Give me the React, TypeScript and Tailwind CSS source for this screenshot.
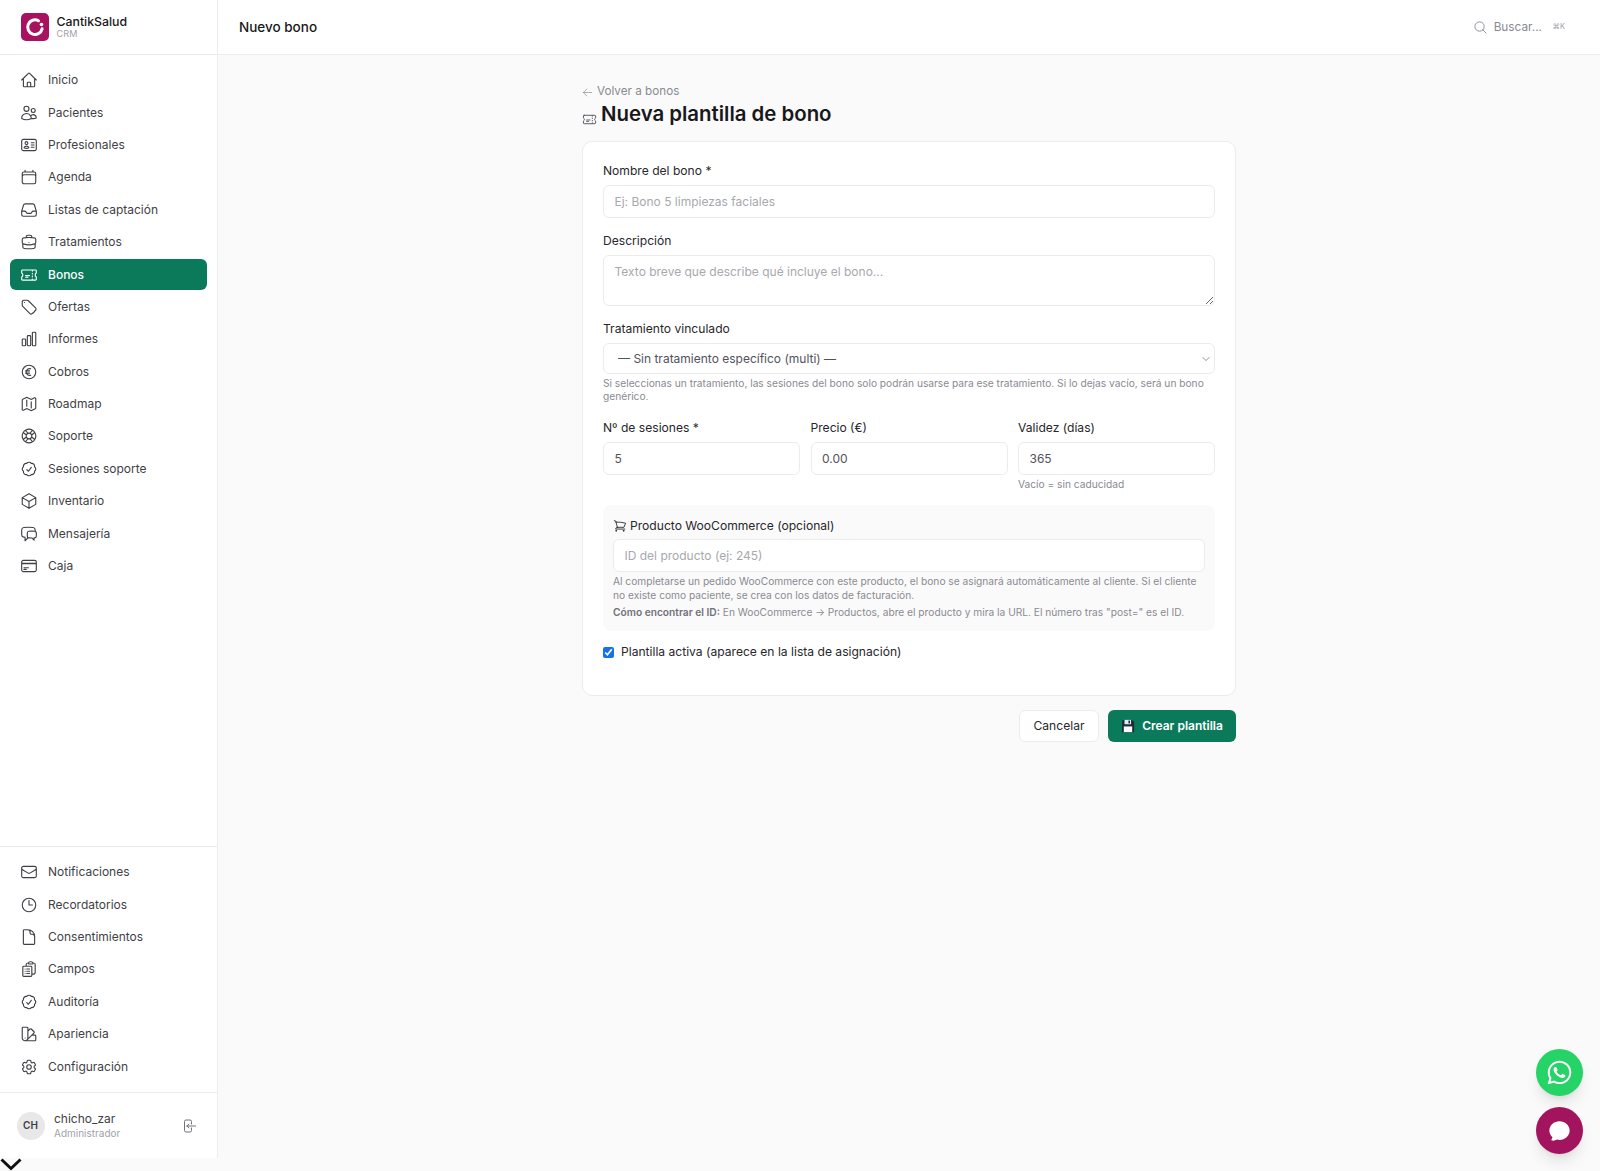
import type { ComponentType, ReactNode } from "react";
import { FaWhatsapp } from "react-icons/fa";
import {
  HiChatBubbleOvalLeft,
  HiOutlineArrowLeft,
  HiOutlineArrowLeftOnRectangle,
  HiOutlineBriefcase,
  HiOutlineCalendar,
  HiOutlineChartBar,
  HiOutlineChatBubbleLeftRight,
  HiOutlineCheckBadge,
  HiOutlineChevronDown,
  HiOutlineClipboardDocumentList,
  HiOutlineClock,
  HiOutlineCog6Tooth,
  HiOutlineCreditCard,
  HiOutlineCube,
  HiOutlineCurrencyEuro,
  HiOutlineDocument,
  HiOutlineEnvelope,
  HiOutlineHome,
  HiOutlineIdentification,
  HiOutlineInbox,
  HiOutlineLifebuoy,
  HiOutlineMagnifyingGlass,
  HiOutlineMap,
  HiOutlineShoppingCart,
  HiOutlineSwatch,
  HiOutlineTag,
  HiOutlineTicket,
  HiOutlineUsers,
} from "react-icons/hi2";

type NavItem = { label: string; icon: ComponentType<{ className?: string }>; active?: boolean };

const mainNav: NavItem[] = [
  { label: "Inicio", icon: HiOutlineHome },
  { label: "Pacientes", icon: HiOutlineUsers },
  { label: "Profesionales", icon: HiOutlineIdentification },
  { label: "Agenda", icon: HiOutlineCalendar },
  { label: "Listas de captación", icon: HiOutlineInbox },
  { label: "Tratamientos", icon: HiOutlineBriefcase },
  { label: "Bonos", icon: HiOutlineTicket, active: true },
  { label: "Ofertas", icon: HiOutlineTag },
  { label: "Informes", icon: HiOutlineChartBar },
  { label: "Cobros", icon: HiOutlineCurrencyEuro },
  { label: "Roadmap", icon: HiOutlineMap },
  { label: "Soporte", icon: HiOutlineLifebuoy },
  { label: "Sesiones soporte", icon: HiOutlineCheckBadge },
  { label: "Inventario", icon: HiOutlineCube },
  { label: "Mensajería", icon: HiOutlineChatBubbleLeftRight },
  { label: "Caja", icon: HiOutlineCreditCard },
];

const bottomNav: NavItem[] = [
  { label: "Notificaciones", icon: HiOutlineEnvelope },
  { label: "Recordatorios", icon: HiOutlineClock },
  { label: "Consentimientos", icon: HiOutlineDocument },
  { label: "Campos", icon: HiOutlineClipboardDocumentList },
  { label: "Auditoría", icon: HiOutlineCheckBadge },
  { label: "Apariencia", icon: HiOutlineSwatch },
  { label: "Configuración", icon: HiOutlineCog6Tooth },
];

const NavLink = ({ item }: { item: NavItem }) => {
  const Icon = item.icon;
  return (
    <a
      href="#"
      className={
        item.active
          ? "flex h-[30.4px] items-center gap-[10px] rounded-md bg-[#0b7a5b] pl-[10px] text-[12px] font-medium text-white"
          : "flex h-[30.4px] items-center gap-[10px] rounded-md pl-[10px] text-[12px] text-[#3f3f46]"
      }
    >
      <Icon className="size-[18px] shrink-0" />
      {item.label}
    </a>
  );
};

const Logo = () => (
  <svg viewBox="0 0 28 28" className="size-[28px] shrink-0">
    <rect width="28" height="28" rx="5" fill="#a8135f" />
    <path d="M17.5 7.8a7.3 7.3 0 1 0 3.6 8" fill="none" stroke="#fff" strokeWidth="3" strokeLinecap="round" />
    <circle cx="20.5" cy="11.5" r="1.8" fill="#fff" />
  </svg>
);

const Sidebar = () => (
  <aside className="flex h-[1158px] w-[218px] shrink-0 flex-col border-r border-[#ececec] bg-white">
    <div className="flex h-[55px] shrink-0 items-center gap-[8px] border-b border-[#ececec] pl-[20.5px]">
      <Logo />
      <div className="pb-[1px]">
        <div className="text-[12.3px] leading-[15px] font-medium text-[#18181b]">CantikSalud</div>
        <div className="text-[9px] leading-[9.5px] tracking-wide text-[#a1a1aa]">CRM</div>
      </div>
    </div>
    <nav className="flex flex-1 flex-col gap-[2px] px-[10px] pt-[10px]">
      {mainNav.map((item) => (
        <NavLink key={item.label} item={item} />
      ))}
    </nav>
    <nav className="flex h-[246px] shrink-0 flex-col gap-[2px] border-t border-[#ececec] px-[10px] pt-[10px]">
      {bottomNav.map((item) => (
        <NavLink key={item.label} item={item} />
      ))}
    </nav>
    <div className="flex h-[66px] shrink-0 items-center border-t border-[#ececec] pr-[20px] pl-[16.5px]">
      <div className="flex size-[28px] items-center justify-center rounded-full bg-[#e8e8e8] text-[10px] font-semibold text-[#3f3f46]">
        CH
      </div>
      <div className="ml-[9.5px] flex-1">
        <div className="text-[12px] leading-[15px] text-[#3f3f46]">chicho_zar</div>
        <div className="text-[10px] leading-[14px] text-[#a1a1aa]">Administrador</div>
      </div>
      <HiOutlineArrowLeftOnRectangle className="size-[16px] text-[#71717a]" />
    </div>
  </aside>
);

const Field = ({ label, children, className }: { label: string; children: ReactNode; className?: string }) => (
  <div className={className}>
    <label className="mb-[5px] block text-[12.1px] leading-[18px] text-[#27272a]">{label}</label>
    {children}
  </div>
);

const inputClass =
  "block h-[33px] w-full rounded-md border border-[#ececec] bg-white px-[10.5px] text-[12px] text-[#52525b] placeholder:text-[#a8a8ae] outline-none";

const helpClass = "text-[10.2px] leading-[13.4px] text-[#8a8a92]";

const FloppyIcon = () => (
  <svg viewBox="0 0 16 16" className="size-[14px]">
    <path d="M1.5 1h11L15 3.5V15H1z" fill="#1e293b" />
    <rect x="4" y="1" width="7.5" height="5" fill="#e2e8f0" />
    <rect x="8.5" y="1.8" width="1.8" height="3.2" fill="#1e293b" />
    <rect x="3.2" y="8.5" width="9.6" height="6.5" fill="#f8fafc" />
  </svg>
);

const BonoForm = () => (
  <div className="mx-auto w-[654px] pt-[29px]">
    <a href="#" className="flex h-[16px] items-center gap-[4px] text-[11.7px] text-[#8a8a92]">
      <HiOutlineArrowLeft className="size-[11px]" />
      Volver a bonos
    </a>
    <h1 className="flex h-[28px] items-center gap-[4px] text-[20.4px] font-semibold text-[#18181b]">
      <HiOutlineTicket className="mt-[10px] size-[15px] font-normal text-[#52525b]" />
      Nueva plantilla de bono
    </h1>
    <div className="mt-[13px] h-[555px] rounded-[10px] border border-[#ececec] bg-white px-[20px] pt-[20px]">
      <Field label="Nombre del bono *">
        <input className={inputClass} placeholder="Ej: Bono 5 limpiezas faciales" />
      </Field>
      <Field label="Descripción" className="mt-[14px]">
        <textarea
          className="block h-[51px] w-full rounded-md border border-[#ececec] bg-white px-[10.5px] py-[7px] text-[12px] text-[#52525b] placeholder:text-[#a8a8ae] outline-none"
          placeholder="Texto breve que describe qué incluye el bono..."
        />
      </Field>
      <Field label="Tratamiento vinculado" className="mt-[14px]">
        <div className="relative">
          <select className="block h-[31px] w-full appearance-none rounded-md border border-[#ececec] bg-white pr-[11px] pl-[14px] text-[12px] text-[#52525b] outline-none">
            <option>— Sin tratamiento específico (multi) —</option>
          </select>
          <HiOutlineChevronDown className="absolute top-[11px] right-[4px] size-[10px] text-[#52525b]" />
        </div>
      </Field>
      <p className={`mt-[3px] ${helpClass}`}>
        Si seleccionas un tratamiento, las sesiones del bono solo podrán usarse para ese tratamiento. Si lo dejas vacío,
        será un bono genérico.
      </p>
      <div className="mt-[15px] grid grid-cols-3 gap-[10.5px]">
        <Field label="Nº de sesiones *">
          <input className={inputClass} defaultValue="5" />
        </Field>
        <Field label="Precio (€)">
          <input className={inputClass} defaultValue="0.00" />
        </Field>
        <Field label="Validez (días)">
          <input className={inputClass} defaultValue="365" />
          <p className={`mt-[3.5px] ${helpClass}`}>Vacío = sin caducidad</p>
        </Field>
      </div>
      <div className="mt-[13px] h-[126px] rounded-lg bg-[#fafafa] px-[10px] pt-[12px]">
        <div className="mb-[4px] flex h-[18px] items-center gap-[3px] text-[12.1px] text-[#27272a]">
          <HiOutlineShoppingCart className="size-[14px]" />
          Producto WooCommerce (opcional)
        </div>
        <input className={inputClass} placeholder="ID del producto (ej: 245)" />
        <p className={`mt-[3.5px] ${helpClass}`}>
          Al completarse un pedido WooCommerce con este producto, el bono se asignará automáticamente al cliente. Si el
          cliente no existe como paciente, se crea con los datos de facturación.
        </p>
        <p className={`mt-[4px] ${helpClass}`}>
          <strong className="font-semibold text-[#71717a]">Cómo encontrar el ID:</strong> En WooCommerce → Productos,
          abre el producto y mira la URL. El número tras "post=" es el ID.
        </p>
      </div>
      <label className="mt-[12.5px] flex items-center gap-[7px] text-[12.1px] text-[#27272a]">
        <input type="checkbox" defaultChecked className="size-[11px] accent-[#1473e6]" />
        Plantilla activa (aparece en la lista de asignación)
      </label>
    </div>
    <div className="mt-[14px] flex justify-end gap-[9px]">
      <button className="h-[32px] w-[80px] rounded-md border border-[#ececec] bg-white text-[12.1px] text-[#27272a]">
        Cancelar
      </button>
      <button className="flex h-[32px] w-[128px] items-center justify-center gap-[7px] rounded-md bg-[#0b7a5b] text-[12px] font-semibold text-white">
        <FloppyIcon />
        Crear plantilla
      </button>
    </div>
  </div>
);

const App = () => {
  return (
    <div className="relative h-[1171px] overflow-hidden bg-[#fafafa] font-[Inter,sans-serif]">
      <div className="flex">
        <Sidebar />
        <div className="min-w-0 flex-1">
          <header className="flex h-[55px] items-center justify-between border-b border-[#ececec] bg-white pr-[35px] pl-[21px]">
            <span className="text-[13.5px] font-medium text-[#18181b]">Nuevo bono</span>
            <div className="flex items-center text-[#8a8a92]">
              <HiOutlineMagnifyingGlass className="size-[15px]" />
              <span className="ml-[6px] pt-[1px] text-[11.8px]">Buscar...</span>
              <span className="ml-[10.5px] text-[7.5px] text-[#a1a1aa]">⌘K</span>
            </div>
          </header>
          <BonoForm />
        </div>
      </div>
      <svg viewBox="0 0 22 13" className="absolute bottom-0 left-0 h-[13px] w-[22px]">
        <path d="M1.5 1.5 11 10.5 20.5 1.5" fill="none" stroke="#111" strokeWidth="3" />
      </svg>
      <button className="absolute top-[1049px] right-[17px] flex size-[47px] items-center justify-center rounded-full bg-[#25d366] text-white shadow-lg">
        <FaWhatsapp className="size-[27px]" />
      </button>
      <button className="absolute top-[1107px] right-[17px] flex size-[47px] items-center justify-center rounded-full bg-[#a3145e] text-white shadow-lg">
        <HiChatBubbleOvalLeft className="size-[25px]" />
      </button>
    </div>
  );
};

export default App;
